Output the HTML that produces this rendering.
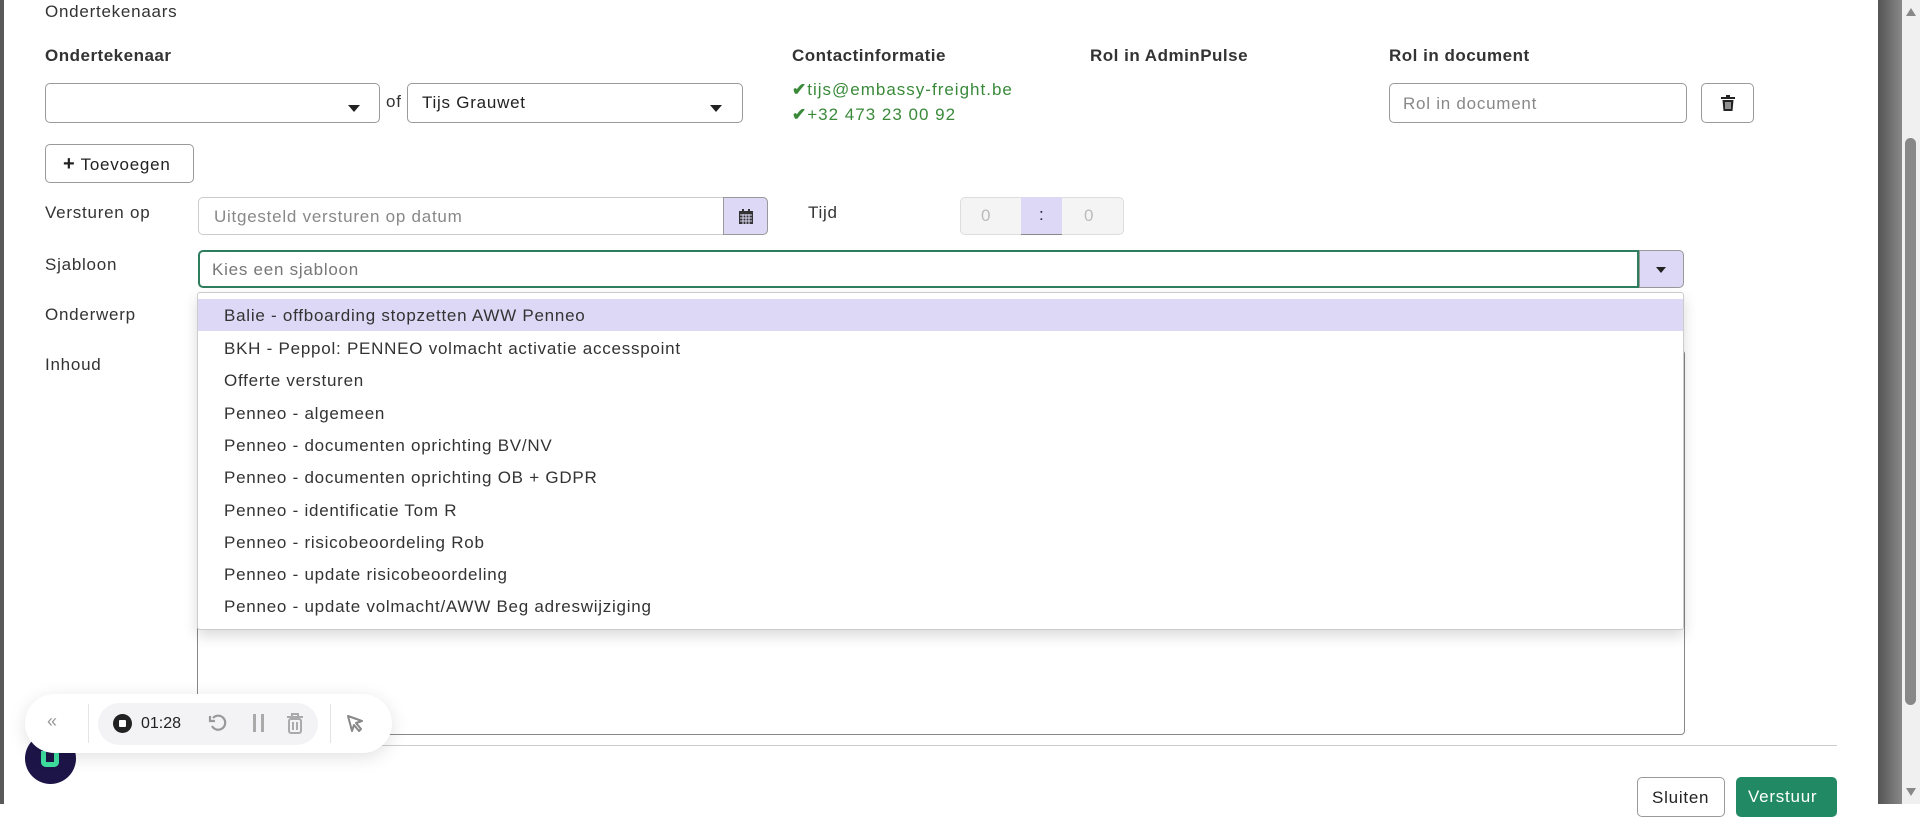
<!DOCTYPE html>
<html><head><meta charset="utf-8"><style>
*{box-sizing:border-box;margin:0;padding:0}
body{width:1920px;height:804px;overflow:hidden;background:#fff;font-family:"Liberation Sans",sans-serif;color:#222;position:relative;letter-spacing:0.75px}
.a{position:absolute}
.lbl{font-size:17px;color:#333}
.hdr{font-size:17px;font-weight:bold;color:#333;letter-spacing:0.5px}
.box{border:1px solid #9a9a9a;border-radius:5px;background:#fff}
.caret{position:absolute;width:0;height:0;border-left:6px solid transparent;border-right:6px solid transparent;border-top:7px solid #222}
.green{color:#3a8a3a;font-size:17px;letter-spacing:1px}
.item{position:absolute;left:0;right:0;height:32.3px;line-height:32.3px;padding-left:26px;font-size:17px;color:#333}
</style></head><body>
<div class="a" style="left:0;top:0;width:4px;height:804px;background:#5a5a5a"></div>
<div class="a lbl" style="left:45px;top:2px">Ondertekenaars</div>
<div class="a hdr" style="left:45px;top:46px">Ondertekenaar</div>
<div class="a hdr" style="left:792px;top:46px">Contactinformatie</div>
<div class="a hdr" style="left:1090px;top:46px">Rol in AdminPulse</div>
<div class="a hdr" style="left:1389px;top:46px">Rol in document</div>

<div class="a box" style="left:45px;top:83px;width:335px;height:40px"><div class="caret" style="left:302px;top:21px"></div></div>
<div class="a lbl" style="left:386px;top:92px">of</div>
<div class="a box" style="left:407px;top:83px;width:336px;height:40px"><span class="a" style="left:14px;top:9px;font-size:17px">Tijs Grauwet</span><div class="caret" style="left:302px;top:21px"></div></div>
<div class="a green" style="left:792px;top:80px"><b>✔</b>tijs@embassy-freight.be</div>
<div class="a green" style="left:792px;top:105px"><b>✔</b>+32 473 23 00 92</div>
<div class="a box" style="left:1389px;top:83px;width:298px;height:40px"><span class="a" style="left:13px;top:10px;font-size:17px;color:#888">Rol in document</span></div>
<div class="a box" style="left:1701px;top:83px;width:53px;height:40px"><svg class="a" style="left:19px;top:11px" width="14" height="16" viewBox="0 0 14 16"><rect x="0" y="2" width="14" height="2" fill="#222"/><rect x="5" y="0" width="4" height="2" fill="#222"/><path d="M1.5 5h11l-1 11h-9z" fill="#222"/><path d="M5 7v7M7 7v7M9 7v7" stroke="#fff" stroke-width="1"/></svg></div>

<div class="a box" style="left:45px;top:144px;width:149px;height:39px"><span class="a" style="left:17px;top:8px;font-size:17px"><b style="font-size:20px">+</b> Toevoegen</span></div>

<div class="a lbl" style="left:45px;top:203px">Versturen op</div>
<div class="a box" style="left:198px;top:197px;width:570px;height:38px;border-color:#ccc"><span class="a" style="left:15px;top:9px;font-size:17px;color:#888">Uitgesteld versturen op datum</span></div>
<div class="a" style="left:723px;top:197px;width:45px;height:38px;background:#dcd8f5;border:1px solid #999;border-radius:0 5px 5px 0"><svg class="a" style="left:15px;top:11px" width="14" height="15" viewBox="0 0 14 15"><rect x="0" y="2" width="14" height="13" fill="#333"/><rect x="3" y="0" width="2" height="4" fill="#333"/><rect x="9" y="0" width="2" height="4" fill="#333"/><path d="M1 6h12M1 9h12M1 12h12M4 5v10M7 5v10M10 5v10" stroke="#dcd8f5" stroke-width="1"/></svg></div>
<div class="a lbl" style="left:808px;top:203px">Tijd</div>
<div class="a" style="left:960px;top:197px;width:164px;height:38px;background:#f4f4f4;border:1px solid #ddd;border-radius:5px"></div>
<div class="a" style="left:1021px;top:197px;width:41px;height:38px;background:#dcd8f5;border-bottom:1px solid #888"></div>
<div class="a" style="left:981px;top:206px;font-size:17px;color:#bbb">0</div>
<div class="a" style="left:1039px;top:205px;font-size:17px;color:#223">:</div>
<div class="a" style="left:1084px;top:206px;font-size:17px;color:#bbb">0</div>

<div class="a lbl" style="left:45px;top:255px">Sjabloon</div>
<div class="a" style="left:198px;top:250px;width:1441px;height:38px;border:2px solid #2e7d5e;border-radius:5px 0 0 5px"><span class="a" style="left:12px;top:8px;font-size:17px;color:#777">Kies een sjabloon</span></div>
<div class="a" style="left:1639px;top:250px;width:45px;height:38px;background:#dcd8f5;border:1px solid #999;border-radius:0 5px 5px 0"><div class="caret" style="left:16px;top:16px;border-left-width:5px;border-right-width:5px;border-top-width:6px"></div></div>

<div class="a lbl" style="left:45px;top:305px">Onderwerp</div>
<div class="a lbl" style="left:45px;top:355px">Inhoud</div>
<div class="a" style="left:197px;top:350px;width:1488px;height:385px;border:1px solid #888;border-radius:4px"></div>

<div class="a" style="left:197px;top:292px;width:1487px;height:338px;background:#fff;border:1px solid #ccc;border-radius:3px;box-shadow:0 6px 14px rgba(0,0,0,0.15)">
<div class="item" style="top:6px;background:#dcd8f5;line-height:34px">Balie - offboarding stopzetten AWW Penneo</div>
<div class="item" style="top:40px">BKH - Peppol: PENNEO volmacht activatie accesspoint</div>
<div class="item" style="top:72.3px">Offerte versturen</div>
<div class="item" style="top:104.6px">Penneo - algemeen</div>
<div class="item" style="top:136.9px">Penneo - documenten oprichting BV/NV</div>
<div class="item" style="top:169.2px">Penneo - documenten oprichting OB + GDPR</div>
<div class="item" style="top:201.5px">Penneo - identificatie Tom R</div>
<div class="item" style="top:233.8px">Penneo - risicobeoordeling Rob</div>
<div class="item" style="top:266.1px">Penneo - update risicobeoordeling</div>
<div class="item" style="top:298.4px">Penneo - update volmacht/AWW Beg adreswijziging</div>
</div>

<div class="a" style="left:45px;top:745px;width:1792px;height:1px;background:#ccc"></div>
<div class="a" style="left:1637px;top:777px;width:88px;height:40px;border:1px solid #999;border-radius:5px;background:#fff"><span class="a" style="left:14px;top:10px;font-size:17px">Sluiten</span></div>
<div class="a" style="left:1736px;top:777px;width:101px;height:40px;border-radius:5px;background:#218a65"><span class="a" style="left:12px;top:10px;font-size:17px;color:#fff">Verstuur</span></div>

<div class="a" style="left:1878px;top:0;width:24px;height:804px;background:linear-gradient(90deg,#555,#888)"></div>
<div class="a" style="left:1902px;top:0;width:18px;height:804px;background:#f0f0f0"></div>
<div class="a" style="left:1905px;top:138px;width:11px;height:567px;background:#888;border-radius:6px"></div>
<div class="a" style="left:1906px;top:8px;width:0;height:0;border-left:5px solid transparent;border-right:5px solid transparent;border-bottom:8px solid #888"></div>
<div class="a" style="left:1906px;top:788px;width:0;height:0;border-left:5px solid transparent;border-right:5px solid transparent;border-top:8px solid #888"></div>

<div class="a" style="left:25px;top:733px;width:51px;height:51px;border-radius:50%;background:#1d1548"><div class="a" style="left:16px;top:18px;width:18px;height:16px;border:5px solid #3ee0a0;border-top:none;border-radius:0 0 5px 5px"></div></div>
<div class="a" style="left:25px;top:694px;width:367px;height:59px;background:#fff;border-radius:30px;box-shadow:0 4px 18px rgba(0,0,0,0.12)">
<span class="a" style="left:22px;top:17px;font-size:18px;color:#999">«</span>
<div class="a" style="left:63px;top:10px;width:1px;height:39px;background:#e4e4e4"></div>
<div class="a" style="left:73px;top:9px;width:220px;height:42px;background:#f3f3f6;border-radius:21px"></div>
<div class="a" style="left:88px;top:20px;width:19px;height:19px;border-radius:50%;background:#222"><div class="a" style="left:6px;top:6px;width:7px;height:7px;background:#fff;border-radius:1px"></div></div>
<span class="a" style="left:116px;top:21px;font-size:16px;color:#222;letter-spacing:0">01:28</span>
<svg class="a" style="left:183px;top:19px" width="20" height="20" viewBox="0 0 20 20"><path d="M5 5A7 7 0 1 1 4 13" fill="none" stroke="#999" stroke-width="2.2"/><path d="M2 3v5h5" fill="none" stroke="#999" stroke-width="2.2"/></svg>
<div class="a" style="left:228px;top:20px;width:3px;height:18px;background:#aaa"></div>
<div class="a" style="left:236px;top:20px;width:3px;height:18px;background:#aaa"></div>
<svg class="a" style="left:261px;top:18px" width="18" height="22" viewBox="0 0 18 22"><path d="M1 5h16M6 5V2h6v3" fill="none" stroke="#aaa" stroke-width="2"/><rect x="3" y="7" width="12" height="14" rx="2" fill="none" stroke="#aaa" stroke-width="2"/><path d="M7 10v8M11 10v8" stroke="#aaa" stroke-width="2"/></svg>
<div class="a" style="left:305px;top:10px;width:1px;height:39px;background:#e4e4e4"></div>
<svg class="a" style="left:320px;top:19px" width="20" height="20" viewBox="0 0 20 20"><path d="M3 3l14 5-6 2 5 6-2 2-5-6-2 6z" fill="none" stroke="#888" stroke-width="2" stroke-linejoin="round"/></svg>
</div>
</body></html>
